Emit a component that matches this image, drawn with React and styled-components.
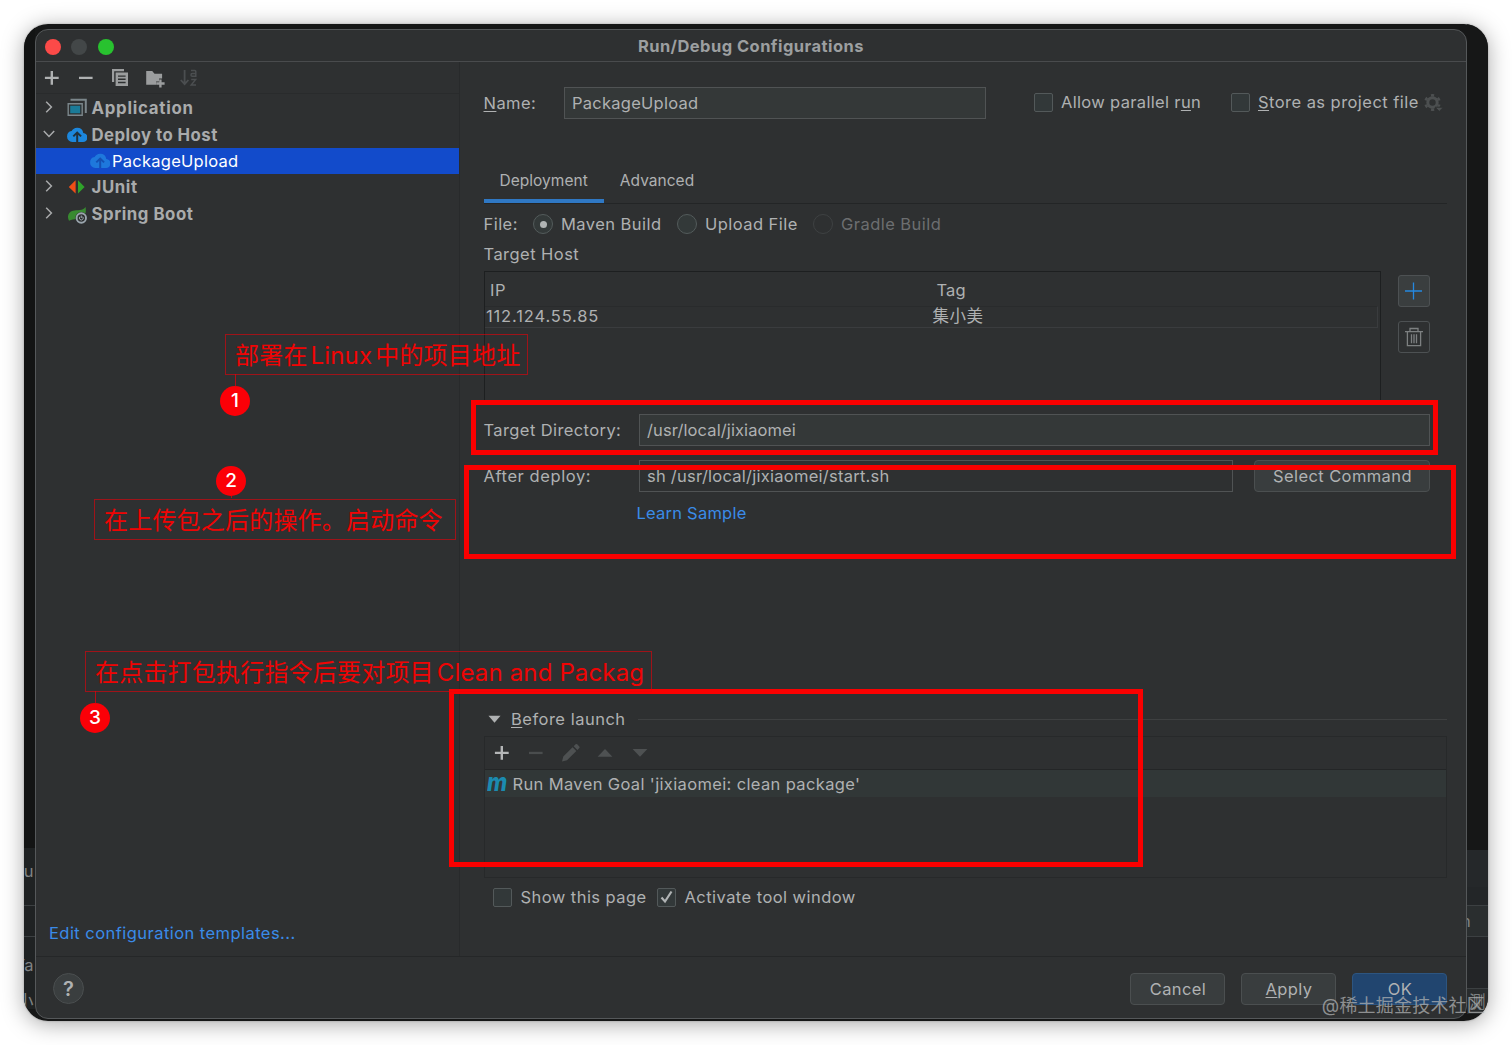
import React, { Fragment, useState } from 'react';
import styled, { createGlobalStyle } from 'styled-components';

const GlobalStyle = createGlobalStyle`
    * {
        box-sizing: border-box;
    }

    body {
        margin: 0;
        background: #fff;
        color: #afb1b2;
        font-family: Inter, 'Noto Sans CJK SC', sans-serif;
        font-size: 16.5px;
        letter-spacing: 0.45px;
        line-height: 20px;
        overflow: hidden;
    }

    u {
        text-underline-offset: 2px;
        text-decoration-thickness: 1px;
        text-decoration-skip-ink: none;
    }
`;

const Page = styled.div`
    position: relative;
    width: 1512px;
    height: 1045px;
    padding: 24px;
    overflow: hidden;
`;

const Desktop = styled.div`
    display: flex;
    width: 1464px;
    height: 997px;
    border-radius: 24px;
    background: #161717;
    overflow: hidden;
`;

const DesktopShadow = styled.div`
    border-radius: 24px;
    box-shadow: 0 0 2px rgba(0, 0, 0, 0.3), 0 3px 22px rgba(0, 0, 0, 0.34);
`;

const Strip = styled.div`
    display: flex;
    flex-direction: column;
    flex: none;
    width: ${p => p.$width}px;
`;

const StripCell = styled.div`
    display: flex;
    align-items: center;
    justify-content: ${p => p.$end ? 'flex-end' : 'flex-start'};
    height: ${p => p.$height}px;
    background: ${p => p.$bg || '#1f2223'};
    border-top: ${p => p.$line ? '1px solid #3c4042' : 'none'};
    border-bottom: ${p => p.$box ? '1px solid #3c4042' : 'none'};
    color: #7f8283;
    white-space: nowrap;
    overflow: hidden;

    span {
        margin: 0 ${p => p.$end ? 1 : 0}px 0 ${p => p.$shift || 0}px;
    }
`;

const Dialog = styled.div`
    display: flex;
    flex-direction: column;
    flex: 1;
    height: 990px;
    margin-top: 5px;
    border: 1px solid #55585a;
    border-radius: 13px;
    background: #2e3031;
    overflow: hidden;
`;

const TitleBar = styled.div`
    display: flex;
    align-items: center;
    flex: none;
    height: 32px;
    padding: 3px 0 0 9px;
    border-bottom: 1px solid #494b4d;
`;

const Light = styled.span`
    width: 16px;
    height: 16px;
    margin-right: 10.3px;
    border-radius: 50%;
    background: ${p => p.$color};
`;

const Title = styled.div`
    margin: -2px 0 0 514px;
    color: #9c9fa0;
    font-weight: 700;
`;

const Body = styled.div`
    display: flex;
    flex: none;
    height: 894px;
`;

const Sidebar = styled.div`
    display: flex;
    flex-direction: column;
    flex: none;
    width: 424px;
    border-right: 1px solid #282a2b;
`;

const SideToolbar = styled.div`
    display: flex;
    align-items: center;
    height: 32px;
    padding-left: 5.5px;
    gap: 14.4px;
    border-bottom: 1px solid #292b2c;

    svg {
        flex: none;
    }
`;

const Tree = styled.div`
    display: flex;
    flex-direction: column;
    flex: 1;
    padding-top: 1px;
`;

const TreeRow = styled.div`
    display: flex;
    align-items: center;
    height: 26.4px;
    padding-left: ${p => p.$child ? 54 : 7}px;
    background: ${p => p.$selected ? '#124bcb' : 'transparent'};
    color: ${p => p.$selected ? '#fff' : '#a9abac'};
    font-weight: ${p => p.$child ? 400 : 700};
    font-size: ${p => p.$child ? 16.5 : 16.8}px;
    letter-spacing: ${p => p.$child ? 0.25 : p.$ls || 0.6}px;
`;

const Arrow = styled.svg`
    flex: none;
    width: 12px;
    height: 12px;
    margin-right: 11.5px;
    margin-top: -2px;
`;

const TreeIcon = styled.svg`
    flex: none;
    width: 20px;
    height: 20px;
    margin-right: ${p => p.$tight ? 2 : 5}px;
`;

const Link = styled.a`
    color: #3a8be8;
    letter-spacing: ${p => p.$ls || 0.45}px;
`;

const SideFooter = styled.div`
    padding: 0 0 13px 13px;
`;

const Main = styled.div`
    display: flex;
    flex-direction: column;
    flex: 1;
    padding: 25px 19px 0 23.5px;
`;

const Row = styled.div`
    display: flex;
    align-items: center;
    flex: none;
    height: ${p => p.$height}px;
    margin-top: ${p => p.$top || 0}px;
`;

const Label = styled.span`
    width: ${p => p.$width ? p.$width + 'px' : 'auto'};
    color: ${p => p.$disabled ? '#6c6e70' : 'inherit'};
    letter-spacing: ${p => p.$ls || 0.45}px;
    white-space: pre;
`;

const Field = styled.div`
    display: flex;
    align-items: center;
    width: ${p => p.$width}px;
    height: 100%;
    padding-left: 7px;
    border: 1px solid #505354;
    background: ${p => p.$plain ? 'transparent' : '#343838'};
    letter-spacing: ${p => p.$ls || 0.25}px;
`;

const OptionGroup = styled.div`
    display: flex;
    align-items: center;
    margin: -2px 0 0 48px;
`;

const Check = styled.span`
    display: flex;
    align-items: center;
    justify-content: center;
    flex: none;
    width: 19px;
    height: 19px;
    margin: 0 8.5px 0 ${p => p.$left || -0.5}px;
    border: 1px solid #53595a;
    border-radius: 2px;
    background: #323839;
`;

const Radio = styled.span`
    display: flex;
    align-items: center;
    justify-content: center;
    width: 20px;
    height: 20px;
    margin: 0 8px 0 ${p => p.$left}px;
    border: 1px solid ${p => p.$disabled ? '#3e4142' : '#535b5b'};
    border-radius: 50%;
    background: ${p => p.$disabled ? 'transparent' : '#333939'};

    &::after {
        content: '';
        width: 7px;
        height: 7px;
        border-radius: 50%;
        background: ${p => p.$on ? '#afb3b3' : 'transparent'};
    }
`;

const Tabs = styled.div`
    display: flex;
    flex: none;
    height: 44px;
    margin-top: 41px;
    border-bottom: 1px solid #232526;
    font-size: 15.5px;
    letter-spacing: 0.03px;
`;

const Tab = styled.div`
    height: 43px;
    padding: 11px 16px 0;
    border-bottom: ${p => p.$active ? '4px solid #2f78c4' : 'none'};
`;

const HostArea = styled.div`
    display: flex;
    justify-content: space-between;
    flex: none;
    height: 132px;
    margin-top: 7px;
    padding-right: 17px;
`;

const HostTable = styled.div`
    width: 897px;
    border: 1px solid #1d1f20;
    border-bottom: none;
`;

const HostRow = styled.div`
    display: grid;
    grid-template-columns: 446.5px 1fr;
    align-items: center;
    height: ${p => p.$head ? 34 : 22}px;
    margin-right: 2px;
    padding: ${p => p.$head ? '2px 0 0 5.5px' : '0 0 0 1.5px'};
    border: 1px solid ${p => p.$head ? 'transparent' : '#3a3c3e'};
    border-left: none;
    border-top-color: ${p => p.$head ? 'transparent' : '#292b2c'};

    span {
        margin-top: ${p => p.$head ? 0 : -2}px;
        line-height: 18px;
    }
`;

const SideButtons = styled.div`
    display: flex;
    flex-direction: column;
    gap: 14px;
    padding-top: 4px;
`;

const IconButton = styled.button`
    display: flex;
    align-items: center;
    justify-content: center;
    width: 32px;
    height: 32px;
    padding: 0;
    border: 1px solid #4d5153;
    border-radius: 3px;
    background: ${p => p.$flat ? 'transparent' : '#3a3e3f'};
`;

const Button = styled.button`
    width: ${p => p.$width || 95}px;
    height: 32px;
    padding: 0 0 0 1px;
    border: 1px solid ${p => p.$primary ? '#2d5580' : '#4b4f50'};
    border-radius: 4px;
    background: ${p => p.$primary ? '#21456f' : '#393d3e'};
    color: #b0b2b3;
    font: inherit;
    letter-spacing: 0.4px;
`;

const Rule = styled.div`
    flex: 1;
    height: 1px;
    margin-left: 12px;
    background: #3e4041;
`;

const LaunchPanel = styled.div`
    flex: none;
    height: 142px;
    margin-top: 7px;
    border: 1px solid #27292a;
`;

const LaunchToolbar = styled.div`
    display: flex;
    align-items: center;
    height: 33px;
    padding-left: 7.5px;
    gap: 14.4px;
    border-bottom: 1px solid #242627;
`;

const LaunchItem = styled.div`
    display: flex;
    align-items: center;
    height: 27px;
    background: #313737;
    letter-spacing: 0.36px;
`;

const MavenMark = styled.span`
    width: 23.5px;
    margin: -4px 2.5px 0 2px;
    color: #1b8bb0;
    font-size: 25px;
    font-style: italic;
    font-weight: 800;
    letter-spacing: 0;
    transform: scaleX(0.87);
    transform-origin: left;
`;

const Footer = styled.div`
    display: flex;
    align-items: center;
    flex: 1;
    padding: 2px 19px 0 17px;
    gap: 16px;
    border-top: 1px solid #252728;
`;

const Help = styled.span`
    display: flex;
    align-items: center;
    justify-content: center;
    width: 31px;
    height: 31px;
    margin-right: auto;
    border: 1px solid #4a4e4f;
    border-radius: 50%;
    background: #3a3e3f;
    font-size: 20px;
    font-weight: 600;
    letter-spacing: 0;
`;

// the red marker layer sits on top of the whole window
const Marker = styled.div`
    position: absolute;
    left: ${p => p.$x}px;
    top: ${p => p.$y}px;
    width: ${p => p.$w}px;
    height: ${p => p.$h}px;
    border: 5px solid #fa0000;
`;

const Note = styled.div`
    position: absolute;
    left: ${p => p.$x}px;
    top: ${p => p.$y}px;
    display: flex;
    align-items: center;
    width: ${p => p.$w}px;
    height: 41px;
    padding: 2px 0 0 9px;
    border: 1px solid rgba(235, 0, 10, 0.6);
    color: #f00404;
    font-size: 24px;
    letter-spacing: 0.2px;
    white-space: pre;
`;

const Latin = styled.span`
    margin: 0 3px;
    letter-spacing: 0.15px;
`;

const Badge = styled.div`
    position: absolute;
    left: ${p => p.$x}px;
    top: ${p => p.$y}px;
    width: 30px;
    height: 30px;
    border-radius: 50%;
    background: #fb0007;
    color: #fff;
    font-size: 19px;
    font-weight: 500;
    letter-spacing: 0;
    line-height: 29px;
    text-align: center;

    &::before {
        content: '';
        position: absolute;
        left: 15px;
        top: ${p => p.$up ? -12 : 29}px;
        width: 1px;
        height: ${p => p.$up ? 13 : 3}px;
        background: rgba(235, 0, 10, 0.7);
    }
`;

const Watermark = styled.div`
    position: absolute;
    right: 27px;
    bottom: 28px;
    color: rgba(175, 177, 178, 0.75);
    font-size: 18px;
    letter-spacing: 0.2px;
    line-height: 22px;
`;

const PlusIcon = ({ color = '#afb1b2' }) => (
    <svg width="20" height="20" viewBox="0 0 20 20">
        <path d="M8.6 3H11v5.7h5.7v2.4H11v5.7H8.6v-5.7H2.9V8.7h5.7z" fill={color} />
    </svg>
);

const MinusIcon = ({ color = '#afb1b2' }) => (
    <svg width="20" height="20" viewBox="0 0 20 20">
        <path d="M3 8.8h13.6v2.3H3z" fill={color} />
    </svg>
);

const CopyIcon = () => (
    <svg width="20" height="20" viewBox="0 0 20 20" fill="#9b9d9e">
        <path d="M2 1h12v2.2H4.2V14H2z" />
        <path fillRule="evenodd" d="M5.6 4.6H18V18H5.6zM8 7.4v1.4h7.6V7.4zm0 3.2V12h7.6v-1.4zm0 3.2v1.4h7.6v-1.4z" />
    </svg>
);

const FolderIcon = () => (
    <svg width="20" height="20" viewBox="0 0 20 20" fill="#9b9d9e">
        <path d="M1.2 3h6l2.3 2.8h7.6v4.6h-3v3h-3v3.4H1.2z" />
        <path d="M14.2 11.4h2.4v2.9h3v2.4h-3v2.9h-2.4v-2.9h-3v-2.4h3z" />
    </svg>
);

const SortIcon = () => (
    <svg width="20" height="20" viewBox="0 0 20 20" fill="none" stroke="#4b4e50" strokeWidth="1.8">
        <path d="M5.6 2v13.6M1.8 12l3.8 4.2L9.4 12" />
        <path d="M12 2.6h3.8q1 0 1 1v4.6h-3.6q-1.2 0-1.2-1.3t1.2-1.3h3.6M12.2 11.6h4.4L12.2 17H17" strokeWidth="1.5" />
    </svg>
);

const CloudIcon = ({ dim }) => (
    <TreeIcon viewBox="0 0 20 20" $tight={dim}>
        <path
            d="M16.3 8A6.3 6.3 0 0 0 10.1 2.7C7.7 2.7 5.6 4 4.6 6A5.4 5.4 0 0 0 .1 11.6 5.2 5.2 0 0 0 5.2 17h10.5a4.5 4.5 0 0 0 .6-9z"
            fill={dim ? '#1e78dc' : '#1c87dd'}
        />
        <path d="M10.2 17V8.4M6.3 11.4l3.9-3.8 3.9 3.8" stroke={dim ? '#1450b4' : '#20303c'} strokeWidth="2" fill="none" />
    </TreeIcon>
);

const AppIcon = () => (
    <TreeIcon viewBox="0 0 20 20">
        <path d="M3.5 1.8h15.3V15" fill="none" stroke="#7b868b" strokeWidth="2" />
        <path d="M1.2 5.7h14v11.6h-14z" fill="none" stroke="#7b868b" strokeWidth="1.4" />
        <path d="M3.2 7.7h10v7.6h-10z" fill="#1b7b98" />
    </TreeIcon>
);

const JUnitIcon = () => (
    <TreeIcon viewBox="0 0 20 20">
        <path d="M8.6 3.2v13.4L1.8 9.9z" fill="#f04e16" />
        <path d="M11 3.2v13.4l6.6-6.7z" fill="#2fa32a" />
    </TreeIcon>
);

const SpringIcon = () => (
    <TreeIcon viewBox="0 0 20 20">
        <path d="M18.6 3c.6 4.5.2 8-3 10.3-3 2.1-8.5 1.4-13.6 3.5C-.4 12.500 1.600 7.800 6 6.800c4.500-1 9.600.2 12.600-3.800z" fill="#388a30" />
        <circle cx="14.3" cy="14" r="6" fill="#2e3031" />
        <circle cx="14.3" cy="14" r="4.7" fill="none" stroke="#9aa5ad" strokeWidth="1.9" />
        <path d="M14.3 11.5V14M13 12.700a1.900 1.900 0 1 0 2.600 0" fill="none" stroke="#9aa5ad" strokeWidth="1" />
    </TreeIcon>
);

const GearIcon = () => (
    <svg width="22" height="20" viewBox="0 0 22 20">
        <circle cx="9.5" cy="10.5" r="4.7" fill="none" stroke="#4c4f50" strokeWidth="3" />
        <circle cx="9.5" cy="10.5" r="7.2" fill="none" stroke="#4c4f50" strokeWidth="2.4" strokeDasharray="3.2 4.34" strokeDashoffset="-2" />
        <path d="M12 15.200h8.500l-4.200 4.300z" fill="#4c4f50" stroke="#2e3031" />
    </svg>
);

const AddHostIcon = () => (
    <svg width="20" height="20" viewBox="0 0 20 20">
        <path d="M9.5 1.5v17M1 10h17" stroke="#2588e0" strokeWidth="1.3" />
    </svg>
);

const TrashIcon = () => (
    <svg width="20" height="20" viewBox="0 0 20 20" fill="none" stroke="#7d8081" strokeWidth="1.3">
        <path d="M1 4.7h18M6 4.2V1.5h8v2.7M3.4 5v13.6h13.2V5M7.5 7.2v9M10 7.2v9M12.5 7.2v9" />
    </svg>
);

const PencilIcon = () => (
    <svg width="20" height="20" viewBox="0 0 20 20" fill="#4e5152">
        <path d="M1 18.6l1.3-5 9.3-9.3L15.3 8 6 17.3zM12.7 3.2l1.9-1.9q.8-.8 1.6 0l2.1 2.1q.8.8 0 1.6l-1.9 1.9z" />
    </svg>
);

const TriangleIcon = ({ up }) => (
    <svg width="20" height="20" viewBox="0 0 20 20" fill="#4e5152">
        <path d={up ? 'M2.6 13.8L10 6l7.4 7.8z' : 'M2.6 6h14.8L10 13.8z'} />
    </svg>
);

const icons = {
    app: <AppIcon />,
    cloud: <CloudIcon />,
    junit: <JUnitIcon />,
    spring: <SpringIcon />,
};

const configGroups = [
    { name: 'Application', icon: 'app', ls: 0.75 },
    { name: 'Deploy to Host', icon: 'cloud', ls: 0.45 },
    { name: 'JUnit', icon: 'junit' },
    { name: 'Spring Boot', icon: 'spring', ls: 0.55 },
];

const children = {
    'Deploy to Host': ['PackageUpload'],
};

const notes = [
    { x: 225, y: 334, w: 303, before: '部署在', latin: 'Linux', after: '中的项目地址' },
    { x: 94, y: 499, w: 362, before: '在上传包之后的操作。启动命令' },
    { x: 85, y: 651, w: 567, before: '在点击打包执行指令后要对项目', latin: 'Clean and Packag' },
];

const App = () => {

    const [selected, setSelected] = useState('PackageUpload');

    const tree = configGroups.map(group => (
        <Fragment key={group.name}>
            <TreeRow $ls={group.ls}>
                <Arrow viewBox="0 0 12 12" fill="none" stroke="#a9abac" strokeWidth="1.5">
                    <path d={children[group.name] ? 'M.8 3L6 8.4 11.2 3' : 'M3.2.8L8.4 6l-5.2 5.2'} />
                </Arrow>
                {icons[group.icon]}
                {group.name}
            </TreeRow>
            {(children[group.name] || []).map(child => (
                <TreeRow key={child} $child $selected={selected === child} onClick={() => setSelected(child)}>
                    <CloudIcon dim />
                    {child}
                </TreeRow>
            ))}
        </Fragment>
    ));

    return (
        <Page>
            <GlobalStyle />
            <DesktopShadow>
                <Desktop>
                    <Strip $width={11}>
                        <StripCell $height={824} $bg="#131414" />
                        <StripCell $height={46} $end><span>u</span></StripCell>
                        <StripCell $height={11} />
                        <StripCell $height={32} $line $box />
                        <StripCell $height={56} $end><span>Ta</span></StripCell>
                        <StripCell $height={16} $end><span>小</span></StripCell>
                    </Strip>

                    <Dialog>
                        <TitleBar>
                            <Light $color="#fc4a48" />
                            <Light $color="#434748" />
                            <Light $color="#28c22f" />
                            <Title>Run/Debug Configurations</Title>
                        </TitleBar>

                        <Body>
                            <Sidebar>
                                <SideToolbar>
                                    <PlusIcon />
                                    <MinusIcon />
                                    <CopyIcon />
                                    <FolderIcon />
                                    <SortIcon />
                                </SideToolbar>
                                <Tree>{tree}</Tree>
                                <SideFooter>
                                    <Link>Edit configuration templates...</Link>
                                </SideFooter>
                            </Sidebar>

                            <Main>
                                <Row $height={32}>
                                    <Label $width={80.5}><u>N</u>ame:</Label>
                                    <Field $width={422}>PackageUpload</Field>
                                    <OptionGroup>
                                        <Check />
                                        <Label $width={170} $ls={0.33}>Allow parallel r<u>u</u>n</Label>
                                        <Check />
                                        <Label $width={165}><u>S</u>tore as project file</Label>
                                        <GearIcon />
                                    </OptionGroup>
                                </Row>

                                <Tabs>
                                    <Tab $active>Deployment</Tab>
                                    <Tab>Advanced</Tab>
                                </Tabs>

                                <Row $height={40}>
                                    <Label $width={33}>File:</Label>
                                    <Radio $left={16.5} $on />
                                    <Label $width={100}>Maven Build</Label>
                                    <Radio $left={16} />
                                    <Label $width={92}>Upload File</Label>
                                    <Radio $left={16} $disabled />
                                    <Label $disabled>Gradle Build</Label>
                                </Row>
                                <Row $height={20}>
                                    <Label>Target Host</Label>
                                </Row>

                                <HostArea>
                                    <HostTable>
                                        <HostRow $head>
                                            <Label>IP</Label>
                                            <Label $ls={0.1}>Tag</Label>
                                        </HostRow>
                                        <HostRow>
                                            <Label $ls={0.85}>112.124.55.85</Label>
                                            <Label>集小美</Label>
                                        </HostRow>
                                    </HostTable>
                                    <SideButtons>
                                        <IconButton><AddHostIcon /></IconButton>
                                        <IconButton $flat><TrashIcon /></IconButton>
                                    </SideButtons>
                                </HostArea>

                                <Row $height={32} $top={10.5}>
                                    <Label $width={155.5} $ls={0.4}>Target Directory:</Label>
                                    <Field $width={791} $ls={0.1}>/usr/local/jixiaomei</Field>
                                </Row>
                                <Row $height={32} $top={14}>
                                    <Label $width={155.5} $ls={0.58}>After deploy:</Label>
                                    <Field $width={594} $plain $ls={0.25}>sh /usr/local/jixiaomei/start.sh</Field>
                                    <Label $width={21} />
                                    <Button $width={176}>Select Command</Button>
                                </Row>
                                <Row $height={20} $top={11.5}>
                                    <Label $width={153} />
                                    <Link $ls={0.23}>Learn Sample</Link>
                                </Row>

                                <Row $height={20} $top={186}>
                                    <svg width="27.5" height="20" viewBox="0 0 27.5 20">
                                        <path d="M4.5 6.8h12l-6 7z" fill="#afb1b2" />
                                    </svg>
                                    <Label $ls={0.5}><u>B</u>efore launch</Label>
                                    <Rule />
                                </Row>
                                <LaunchPanel>
                                    <LaunchToolbar>
                                        <PlusIcon color="#b4b6b7" />
                                        <MinusIcon color="#4a4d4e" />
                                        <PencilIcon />
                                        <TriangleIcon up />
                                        <TriangleIcon />
                                    </LaunchToolbar>
                                    <LaunchItem>
                                        <MavenMark>m</MavenMark>
                                        Run Maven Goal 'jixiaomei: clean package'
                                    </LaunchItem>
                                </LaunchPanel>
                                <Row $height={20} $top={9}>
                                    <Check $left={9.5} />
                                    <Label $width={137}>Show this page</Label>
                                    <Check>
                                        <svg width="15" height="15" viewBox="0 0 15 15">
                                            <path d="M2.5 7.5l3.5 4 6.5-10" fill="none" stroke="#b0b3b4" strokeWidth="2.2" />
                                        </svg>
                                    </Check>
                                    <Label>Activate tool window</Label>
                                </Row>
                            </Main>
                        </Body>

                        <Footer>
                            <Help>?</Help>
                            <Button>Cancel</Button>
                            <Button><u>A</u>pply</Button>
                            <Button $primary>OK</Button>
                        </Footer>
                    </Dialog>

                    <Strip $width={21}>
                        <StripCell $height={826} $bg="#161717" />
                        <StripCell $height={37} $bg="#25282a" />
                        <StripCell $height={18} $bg="#232628" />
                        <StripCell $height={32} $bg="#2a2e2f" $line $box $shift={-6}><span>n</span></StripCell>
                        <StripCell $height={51} $bg="#232527" />
                        <StripCell $height={26} $bg="#292c2d" $line $shift={2}><span>测</span></StripCell>
                    </Strip>
                </Desktop>
            </DesktopShadow>

            <Marker $x={471} $y={399.5} $w={967} $h={55} />
            <Marker $x={464} $y={464.5} $w={992} $h={94} />
            <Marker $x={449} $y={688.5} $w={694} $h={178} />

            {notes.map(note => (
                <Note key={note.x} $x={note.x} $y={note.y} $w={note.w}>
                    {note.before}
                    {note.latin ? <Latin>{note.latin}</Latin> : null}
                    {note.after}
                </Note>
            ))}
            <Badge $x={220} $y={386} $up>1</Badge>
            <Badge $x={216} $y={466}>2</Badge>
            <Badge $x={80} $y={703} $up>3</Badge>

            <Watermark>@稀土掘金技术社区</Watermark>
        </Page>
    );
};

export default App;
